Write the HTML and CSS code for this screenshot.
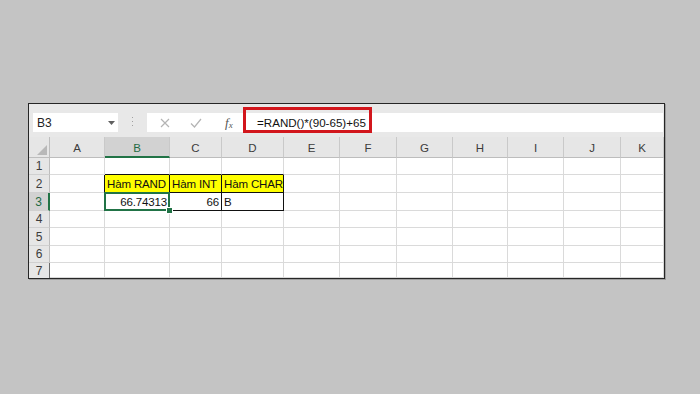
FILE: index.html
```html
<!DOCTYPE html>
<html>
    <head>
        <meta charset="utf-8" />
        <title>Hàm RAND, INT, CHAR</title>
        <link rel="stylesheet" href="styles.css">
    </head>
    <body>
        <div class="window">
            <div class="toolbar">
                <div class="namebox">
                    <span>B3</span>
                    <svg width="7" height="4" viewBox="0 0 7 4"><path d="M0 0h7L3.5 4z" fill="#606060"/></svg>
                </div>
                <div class="grip">
                    <svg width="3" height="13" viewBox="0 0 3 13">
                        <rect x="1" y="1" width="1" height="1" fill="#a0a0a0"/>
                        <rect x="1" y="5" width="1" height="1" fill="#a0a0a0"/>
                        <rect x="1" y="9" width="1" height="1" fill="#a0a0a0"/>
                    </svg>
                </div>
                <div class="formula">
                    <div class="buttons">
                        <svg class="btn" width="10" height="10" viewBox="0 0 10 10"><path d="M1 1l8 8M9 1l-8 8" stroke="#b4b4b4" stroke-width="1.2"/></svg>
                        <svg class="btn" width="12" height="10" viewBox="0 0 12 10"><path d="M1 5.5l3.5 3.5L11 1" stroke="#b4b4b4" stroke-width="1.2" fill="none"/></svg>
                        <span class="fx">f<sub>x</sub></span>
                    </div>
                    <div class="input">
                        <span class="text">=RAND()*(90-65)+65</span>
                        <div class="mark"></div>
                    </div>
                </div>
            </div>
            <div class="sheet">
                <div class="corner">
                    <svg width="10" height="10" viewBox="0 0 10 10"><path d="M10 0v10H0z" fill="#b8b8b8"/></svg>
                </div>
                <div class="colhead">A</div>
                <div class="colhead sel">B</div>
                <div class="colhead">C</div>
                <div class="colhead">D</div>
                <div class="colhead">E</div>
                <div class="colhead">F</div>
                <div class="colhead">G</div>
                <div class="colhead">H</div>
                <div class="colhead">I</div>
                <div class="colhead">J</div>
                <div class="colhead">K</div>

                <div class="rowhead">1</div>
                <div class="cell"></div>
                <div class="cell bt"></div>
                <div class="cell bt"></div>
                <div class="cell bt"></div>
                <div class="cell"></div><div class="cell"></div><div class="cell"></div><div class="cell"></div><div class="cell"></div><div class="cell"></div><div class="cell"></div>

                <div class="rowhead">2</div>
                <div class="cell bl"></div>
                <div class="cell box yellow">Hàm RAND</div>
                <div class="cell box yellow">Hàm INT</div>
                <div class="cell box yellow">Hàm CHAR</div>
                <div class="cell"></div><div class="cell"></div><div class="cell"></div><div class="cell"></div><div class="cell"></div><div class="cell"></div><div class="cell"></div>

                <div class="rowhead sel">3</div>
                <div class="cell bl"></div>
                <div class="cell box num active">66.74313</div>
                <div class="cell box num">66</div>
                <div class="cell box">B</div>
                <div class="cell"></div><div class="cell"></div><div class="cell"></div><div class="cell"></div><div class="cell"></div><div class="cell"></div><div class="cell"></div>

                <div class="rowhead">4</div>
                <div class="cell"></div><div class="cell"></div><div class="cell"></div><div class="cell"></div><div class="cell"></div><div class="cell"></div><div class="cell"></div><div class="cell"></div><div class="cell"></div><div class="cell"></div><div class="cell"></div>

                <div class="rowhead">5</div>
                <div class="cell"></div><div class="cell"></div><div class="cell"></div><div class="cell"></div><div class="cell"></div><div class="cell"></div><div class="cell"></div><div class="cell"></div><div class="cell"></div><div class="cell"></div><div class="cell"></div>

                <div class="rowhead">6</div>
                <div class="cell"></div><div class="cell"></div><div class="cell"></div><div class="cell"></div><div class="cell"></div><div class="cell"></div><div class="cell"></div><div class="cell"></div><div class="cell"></div><div class="cell"></div><div class="cell"></div>

                <div class="rowhead last">7</div>
                <div class="cell"></div><div class="cell"></div><div class="cell"></div><div class="cell"></div><div class="cell"></div><div class="cell"></div><div class="cell"></div><div class="cell"></div><div class="cell"></div><div class="cell"></div><div class="cell"></div>
            </div>
        </div>
    </body>
</html>
```

FILE: styles.css
```css
html, body {
    margin: 0;
    padding: 0;
    height: 100vh;
}
body {
    background: #c4c4c4;
    font-family: "Liberation Sans", Arial, sans-serif;
    padding: 103px 0 0 28px;
    box-sizing: border-box;
}
.window {
    width: 637px;
    height: 176px;
    box-sizing: border-box;
    border: 1px solid #262626;
    box-shadow: 1px 1px 0 #9c9c9c;
    background: #e8e8e8;
    display: flex;
    flex-direction: column;
    overflow: hidden;
}

/* formula bar */
.toolbar {
    height: 33px;
    flex: none;
    display: flex;
    align-items: flex-start;
    padding: 9px 1px 0 4px;
    box-sizing: border-box;
}
.namebox {
    width: 85px;
    height: 19px;
    background: #fff;
    display: flex;
    align-items: center;
    justify-content: space-between;
    padding: 0 3px 0 4px;
    box-sizing: border-box;
    font-size: 12px;
    color: #222;
}
.grip {
    width: 29px;
    height: 19px;
    display: flex;
    align-items: center;
    justify-content: center;
}
.formula {
    flex: 1;
    height: 19px;
    background: #fff;
    display: flex;
}
.buttons {
    width: 96px;
    display: flex;
    align-items: center;
    padding-left: 13px;
    box-sizing: border-box;
}
.btn {
    margin-right: 20px;
}
.fx {
    font-family: "Liberation Serif", "Times New Roman", serif;
    font-style: italic;
    font-size: 13px;
    color: #555;
    margin-left: 3px;
    line-height: 1;
}
.fx sub {
    font-size: 9px;
    vertical-align: -1px;
}
.input {
    flex: 1;
    position: relative;
    display: flex;
    align-items: center;
    padding-left: 14px;
    font-size: 11.6px;
    color: #111;
}
.mark {
    position: absolute;
    left: 0;
    top: -6px;
    width: 129px;
    height: 26px;
    box-sizing: border-box;
    border: 3px solid #d2161c;
}

/* grid */
.sheet {
    flex: 1;
    display: grid;
    grid-template-columns: 21px 55px 65px 52px 62px 56px 57px 56px 55px 56px 57px 1fr;
    grid-template-rows: 21px 17px 18px 18px 17px 18px 17px 1fr;
    background: #fff;
}
.corner {
    background: #e6e6e6;
    border-right: 1px solid #bdbdbd;
    border-bottom: 1px solid #bdbdbd;
    display: flex;
    align-items: flex-end;
    justify-content: flex-end;
    padding: 0 2px 2px 0;
}
.colhead {
    background: #e6e6e6;
    border-right: 1px solid #c9c9c9;
    border-bottom: 1px solid #bdbdbd;
    font-size: 11.5px;
    color: #3c3c3c;
    display: flex;
    align-items: center;
    justify-content: center;
    padding-top: 2px;
}
.colhead.sel {
    background: #d2d2d2;
    color: #1f6b44;
    border-bottom: 2px solid #217346;
}
.rowhead {
    background: #e6e6e6;
    border-right: 1px solid #bdbdbd;
    border-bottom: 1px solid #d0d0d0;
    font-size: 12px;
    color: #3c3c3c;
    display: flex;
    align-items: center;
    justify-content: center;
}
.rowhead.sel {
    background: #d2d2d2;
    color: #1f6b44;
    border-right: 2px solid #217346;
}
.rowhead.last {
    border-right-color: #6a6a6a;
    border-bottom: none;
}
.cell {
    border-right: 1px solid #dadada;
    border-bottom: 1px solid #dadada;
    font-size: 11.5px;
    letter-spacing: -0.15px;
    color: #111;
    display: flex;
    align-items: center;
    padding: 0 2px;
    white-space: nowrap;
    box-sizing: border-box;
}
.cell.bt {
    border-bottom-color: #111;
}
.cell.bl {
    border-right-color: #111;
}
.cell.box {
    border-right-color: #111;
    border-bottom-color: #111;
}
.cell.yellow {
    background: #ffff00;
}
.cell.num {
    justify-content: flex-end;
}
.cell.active {
    position: relative;
}
.cell.active::after {
    content: "";
    position: absolute;
    left: -1px;
    top: -1px;
    right: -1px;
    bottom: -1px;
    border: 2px solid #217346;
}
.cell.active::before {
    content: "";
    position: absolute;
    right: -4px;
    bottom: -4px;
    width: 5px;
    height: 5px;
    background: #217346;
    border: 1px solid #fff;
    z-index: 1;
}
```
